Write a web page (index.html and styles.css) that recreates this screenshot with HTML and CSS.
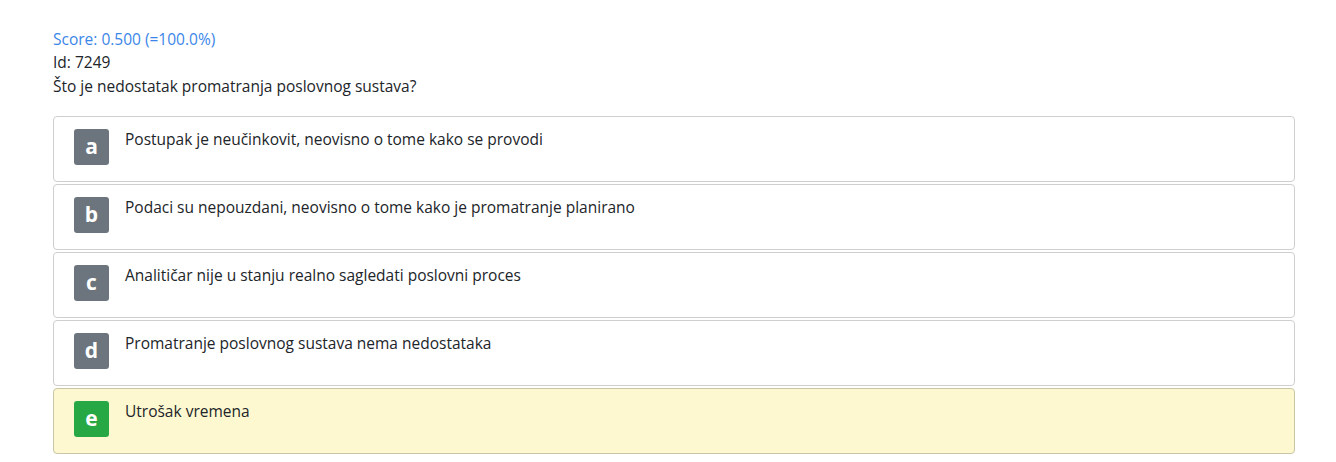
FILE: index.html
```html
<!DOCTYPE html>
<html lang="hr">
<head>
<meta charset="utf-8">
<link rel="stylesheet" href="styles.css">
</head>
<body>
<main class="question">
  <div class="score">Score: 0.500 (=100.0%)</div>
  <div class="meta">Id: 7249</div>
  <div class="text">Što je nedostatak promatranja poslovnog sustava?</div>
  <ul class="answers">
    <li class="answer"><span class="badge">a</span><span class="label">Postupak je neučinkovit, neovisno o tome kako se provodi</span></li>
    <li class="answer"><span class="badge">b</span><span class="label">Podaci su nepouzdani, neovisno o tome kako je promatranje planirano</span></li>
    <li class="answer"><span class="badge">c</span><span class="label">Analitičar nije u stanju realno sagledati poslovni proces</span></li>
    <li class="answer"><span class="badge">d</span><span class="label">Promatranje poslovnog sustava nema nedostataka</span></li>
    <li class="answer correct"><span class="badge">e</span><span class="label">Utrošak vremena</span></li>
  </ul>
</main>
</body>
</html>
```
FILE: styles.css
```css
* { box-sizing: border-box; }
body {
  margin: 0;
  background: #fff;
  font-family: "Open Sans", "Noto Sans", sans-serif;
  color: #212529;
}
.question {
  padding: 28px 41px 0 53px;
  font-size: 15.5px;
}
.score { color: #3b86e8; line-height: 23px; }
.meta { line-height: 23px; }
.text { line-height: 25px; margin-bottom: 17px; }
.answers {
  list-style: none;
  margin: 0;
  padding: 0;
  display: flex;
  flex-direction: column;
  gap: 2px;
}
.answer {
  display: flex;
  align-items: flex-start;
  gap: 16px;
  height: 66px;
  padding: 12px 20px;
  border: 1px solid #cfcfcf;
  border-radius: 4px;
  background: #fff;
}
.answer.correct {
  background: #fef8d0;
  border-color: #c9c6a6;
}
.badge {
  width: 35px;
  height: 36px;
  border-radius: 3px;
  background: #6c757d;
  color: #fff;
  font-weight: 700;
  font-size: 21px;
  display: flex;
  align-items: center;
  justify-content: center;
  line-height: 1;
  padding-bottom: 2px;
}
.correct .badge { background: #28a745; }
.label {
  font-size: 15.5px;
  line-height: 20px;
}
```
